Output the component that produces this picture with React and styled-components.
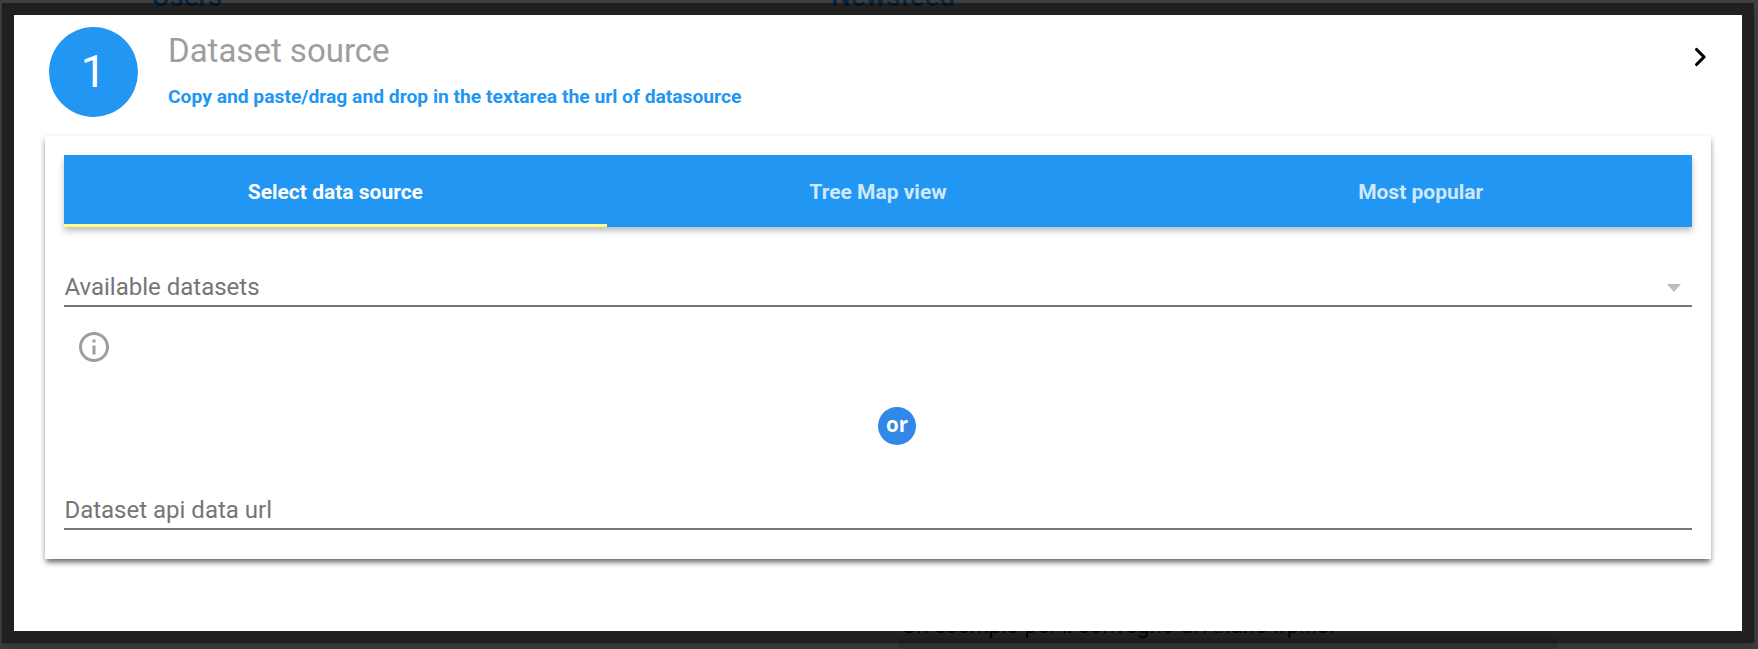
import React from "react";
import styled, { createGlobalStyle } from "styled-components";

const Global = createGlobalStyle`
  * { box-sizing: border-box; }
  body { margin: 0; overflow: hidden; font-family: Roboto, sans-serif; }
`;
const Backdrop = styled.div`
  position: relative;
  width: 1758px;
  height: 649px;
  padding: 3px 4px 6px 2px;
  overflow: hidden;
  background: #404040;
`;
const PageText = styled.span`
  position: absolute;
  left: ${(p) => p.$x}px;
  top: ${(p) => p.$y}px;
  font-size: ${(p) => p.$size}px;
  line-height: 30px;
  font-weight: ${(p) => p.$weight || 400};
  color: ${(p) => p.$color};
  white-space: nowrap;
`;
const PageBlock = styled.div`
  position: absolute;
  left: 899px;
  top: 638px;
  width: 658px;
  height: 11px;
  background: #353a3b;
`;
const Dialog = styled.main`
  position: relative;
  width: 1752px;
  height: 640px;
  border: 12px solid rgba(0, 0, 0, 0.5);
  background: #fff padding-box;
  box-shadow: 0 6px 10px rgba(0, 0, 0, 0.2);
`;
const Header = styled.header`
  display: flex;
  align-items: flex-start;
  height: 121px;
  padding: 12px 24px 0 35px;
`;
const Step = styled.div`
  display: grid;
  place-items: center;
  width: 89px;
  height: 90px;
  border-radius: 50%;
  background: #2196f3;
  color: #fff;
  font-size: 45px;
  line-height: 90px;
`;
const Heading = styled.div`
  flex: 1;
  padding: 6px 0 0 30px;
`;
const Title = styled.h1`
  margin: 0;
  font-size: 33px;
  line-height: 36px;
  font-weight: 400;
  color: #9e9e9e;
`;
const Subtitle = styled.p`
  margin: 16px 0 0;
  font-size: 19.25px;
  line-height: 24px;
  font-weight: 700;
  color: #2196f3;
`;
const NextIcon = styled.svg`
  width: 36px;
  height: 36px;
  margin-top: 12px;
`;
const Card = styled.section`
  width: 1666px;
  height: 423px;
  margin-left: 31px;
  padding: 19px 19px 0;
  background: #fff;
  box-shadow: 0 5px 5px -2px rgba(0, 0, 0, 0.4), 0 3px 6px rgba(0, 0, 0, 0.3);
`;
const Tabs = styled.nav`
  display: grid;
  grid-template-columns: repeat(3, 1fr);
  height: 72px;
  background: #2196f3;
  box-shadow: 0 4px 6px rgba(0, 0, 0, 0.25);
`;
const Tab = styled.button`
  padding: 5px 0 0;
  border: 0;
  border-bottom: 3px solid ${(p) => (p.$active ? "#ffff85" : "transparent")};
  background: none;
  color: ${(p) => (p.$active ? "#fff" : "rgba(255, 255, 255, 0.8)")};
  font: 700 21px Roboto, sans-serif;
`;
const Field = styled.div`
  display: flex;
  align-items: center;
  justify-content: space-between;
  height: 40px;
  margin-top: ${(p) => p.$gap}px;
  padding: 2px 10px 0 0.4px;
  border-bottom: 2px solid #757575;
  color: #757575;
  font-size: 24px;
  line-height: 38px;
`;
const Caret = styled.i`
  margin: 1px 1px 0 0;
  border: 7.5px solid transparent;
  border-top: 8px solid #bdbdbd;
  border-bottom: 0;
`;
const InfoIcon = styled.svg`
  display: block;
  width: 36px;
  height: 36px;
  margin: 22px 0 0 12px;
`;
const Or = styled.div`
  width: 38px;
  height: 38px;
  margin: 42px 0 0 814px;
  border-radius: 50%;
  background: #3188e8;
  color: #fff;
  text-align: center;
  font: 700 20.5px/34px "Open Sans", sans-serif;
`;

export default function App() {
  return (
    <>
      <Global />
      <Backdrop>
        <PageText $x={151.5} $y={-18} $size={27.5} $weight={500} $color="#06294b">Users</PageText>
        <PageText $x={831} $y={-18} $size={27.7} $weight={500} $color="#06294b">Newsfeed</PageText>
        <PageText $x={902} $y={610} $size={22.2} $color="#000">Un esempio per il convegno di Ariano Irpino.</PageText>
        <PageBlock />
        <Dialog>
          <Header>
            <Step>1</Step>
            <Heading>
              <Title>Dataset source</Title>
              <Subtitle>Copy and paste/drag and drop in the textarea the url of datasource</Subtitle>
            </Heading>
            <NextIcon viewBox="0 0 24 24">
              <path d="M9.7 7 14.7 12l-5 5" fill="none" stroke="#000" strokeWidth="2.1" strokeLinecap="round" strokeLinejoin="round" />
            </NextIcon>
          </Header>
          <Card>
            <Tabs>
              <Tab $active>Select data source</Tab>
              <Tab>Tree Map view</Tab>
              <Tab>Most popular</Tab>
            </Tabs>
            <Field $gap={40}>Available datasets<Caret /></Field>
            <InfoIcon viewBox="0 0 24 24" fill="#9e9e9e">
              <path d="M11 17h2v-6h-2v6zm1-15C6.48 2 2 6.48 2 12s4.480 10 10 10 10-4.480 10-10S17.520 2 12 2zm0 18c-4.410 0-8-3.590-8-8s3.590-8 8-8 8 3.590 8 8-3.590 8-8 8zM11 9h2V7h-2v2z" />
            </InfoIcon>
            <Or>or</Or>
            <Field $gap={45}>Dataset api data url</Field>
          </Card>
        </Dialog>
      </Backdrop>
    </>
  );
}
